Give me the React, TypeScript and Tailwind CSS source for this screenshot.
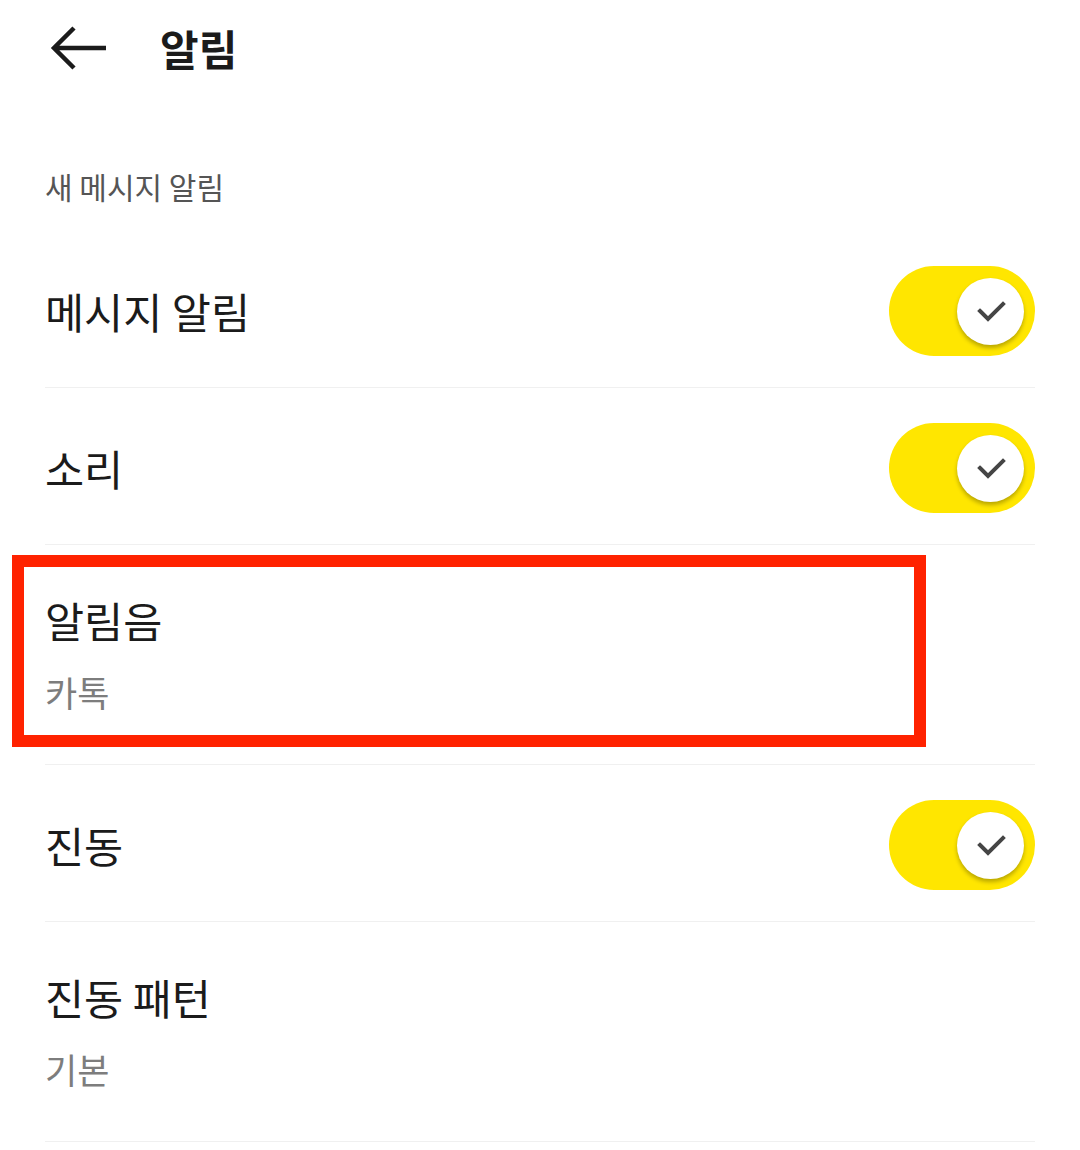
const font = "font-['Noto_Sans_CJK_KR','Noto_Sans',sans-serif]";

function Toggle() {
  return (
    <div className="mt-[4px] flex h-[90px] w-[146px] shrink-0 items-center justify-end rounded-full bg-[#ffe600] pr-[11px]">
      <div className="flex h-[67px] w-[67px] items-center justify-center rounded-full bg-white shadow-[0_3px_4px_rgba(0,0,0,0.28)]">
        <svg width="34" height="34" viewBox="0 0 34 34">
          <polyline
            points="6,17 14,25 29,10"
            fill="none"
            stroke="#454545"
            strokeWidth="4"
            strokeLinecap="square"
          />
        </svg>
      </div>
    </div>
  );
}

function SwitchRow({ label }: { label: string }) {
  return (
    <div className="flex h-[157px] items-center justify-between border-b border-[#f0f0f0]">
      <span className="pt-[4px] text-[42.5px] leading-[50px] text-[#1b1b1b]">{label}</span>
      <Toggle />
    </div>
  );
}

function DetailRow({ label, value }: { label: string; value: string }) {
  return (
    <div className="flex h-[220px] flex-col border-b border-[#f0f0f0] pt-[50px]">
      <span className="text-[42.5px] leading-[50px] text-[#1b1b1b]">{label}</span>
      <span className="mt-[22px] text-[35px] leading-[50px] text-[#7d7d7d]">{value}</span>
    </div>
  );
}

export default function App() {
  return (
    <div className={`relative h-[1150px] w-[1080px] overflow-hidden bg-white ${font}`}>
      <div className="flex h-[96px] items-center pl-[50px]">
        <svg width="58" height="48" viewBox="0 0 58 48">
          <path d="M4 24 H56 M24 4 L4 24 L24 44" fill="none" stroke="#1b1b1b" strokeWidth="4.5" />
        </svg>
        <span className="ml-[52px] text-[42px] font-bold leading-[50px] text-[#1b1b1b]">알림</span>
      </div>

      <div className="px-[45px]">
        <div className="h-[135px] pt-[70px] text-[30px] leading-[40px] text-[#555]">새 메시지 알림</div>
        <SwitchRow label="메시지 알림" />
        <SwitchRow label="소리" />
        <DetailRow label="알림음" value="카톡" />
        <SwitchRow label="진동" />
        <DetailRow label="진동 패턴" value="기본" />
      </div>

      <div className="absolute left-[12px] top-[555px] h-[192px] w-[914px] border-[12px] border-[#ff2200]" />
    </div>
  );
}
